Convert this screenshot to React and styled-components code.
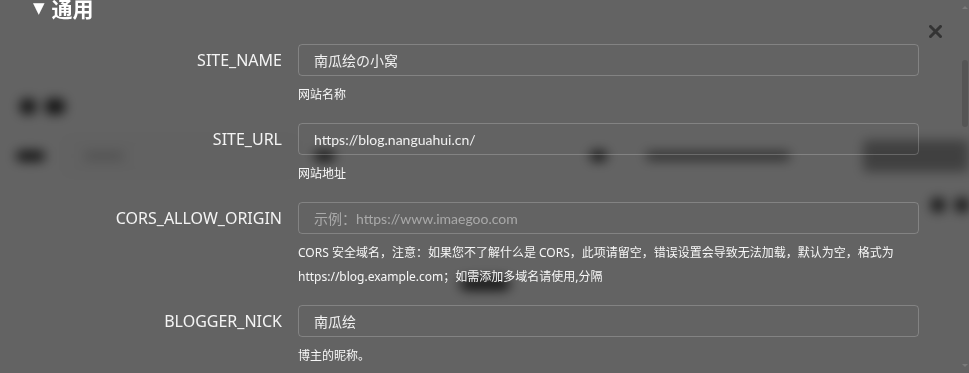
import React from 'react';
import styled, {createGlobalStyle} from 'styled-components';

const fields = [
    {key: 'SITE_NAME', value: '南瓜绘の小窝', help: ['网站名称']},
    {key: 'SITE_URL', value: 'https://blog.nanguahui.cn/', help: ['网站地址']},
    {
        key: 'CORS_ALLOW_ORIGIN',
        placeholder: '示例：https://www.imaegoo.com',
        help: [
            'CORS 安全域名，注意：如果您不了解什么是 CORS，此项请留空，错误设置会导致无法加载，默认为空，格式为',
            'https://blog.example.com；如需添加多域名请使用,分隔',
        ],
    },
    {key: 'BLOGGER_NICK', value: '南瓜绘', help: ['博主的昵称。']},
];

const App = () => {
    return (
        <>
            <GlobalStyle/>
            <BgPage>
                <BgTitle>
                    <Blob w={16} h={15}/>
                    <Blob w={20} h={15}/>
                </BgTitle>
                <BgRow>
                    <Blob w={30} h={10}/>
                    <BgInput>
                        <Blob w={40} h={8} light/>
                    </BgInput>
                    <BgGap/>
                    <Blob w={22} h={10}/>
                    <BgSpacer w={265}/>
                    <Blob w={18} h={10}/>
                    <BgSpacer w={40}/>
                    <Blob w={150} h={8} soft/>
                    <BgSpacer w={76}/>
                    <BgButton/>
                </BgRow>
                <BgIcons>
                    <Blob w={14} h={14}/>
                    <Blob w={14} h={14}/>
                </BgIcons>
                <BgFoot>
                    <Blob w={50} h={12}/>
                </BgFoot>
            </BgPage>

            <Overlay>
                <Heading><Caret>▼</Caret>通用</Heading>
                <CloseButton aria-label="close">
                    <svg width="13" height="13" viewBox="0 0 13 13">
                        <path d="M1.5 1.5 L11.5 11.5 M11.5 1.5 L1.5 11.5" stroke="#343434" strokeWidth="3"
                              strokeLinecap="square"/>
                    </svg>
                </CloseButton>
                <Form>
                    { fields.map ( ( f ) => (
                        <Row key={ f.key }>
                            <Label>{ f.key }</Label>
                            <Field>
                                <Input defaultValue={ f.value || '' } placeholder={ f.placeholder }/>
                                <Help>
                                    { f.help.map ( ( line, i ) => <div key={ i }>{ line }</div> ) }
                                </Help>
                            </Field>
                        </Row>
                    ) ) }
                </Form>
                <ScrollBar>
                    <ScrollArrow/>
                    <ScrollThumb/>
                    <ScrollArrow down/>
                </ScrollBar>
            </Overlay>
        </>
    );
};

// ---------- STILI ----------

const GlobalStyle = createGlobalStyle`
    html, body {
        margin: 0;
        height: 100%;
        overflow: hidden;
        background: #fff;
        font-family: "Noto Sans", "Noto Sans CJK SC", sans-serif;
    }
`;

const BgPage = styled.div`
    height: 373px;
    padding: 99px 0 0 20px;
    box-sizing: border-box;
    filter: blur(6px);
    background: #fff;
`;

const BgTitle = styled.div`
    display: flex;
    gap: 9px;
`;

const Blob = styled.div`
    width: ${ p => p.w }px;
    height: ${ p => p.h }px;
    border-radius: 6px;
    background: ${ p => p.light ? '#d0d0d0' : p.soft ? '#6a6a6a' : '#2a2a2a' };
`;

const BgRow = styled.div`
    display: flex;
    align-items: center;
    margin: 24px 0 0 -4px;
`;

const BgInput = styled.div`
    width: 220px;
    height: 34px;
    margin-left: 20px;
    display: flex;
    align-items: center;
    padding-left: 18px;
    border: 1px solid #e4e4e4;
    border-radius: 4px;
    background: #fbfbfb;
`;

const BgGap = styled.div`
    width: 18px;
`;

const BgSpacer = styled.div`
    width: ${ p => p.w }px;
`;

const BgButton = styled.div`
    width: 110px;
    height: 32px;
    border-radius: 4px;
    background: #a5a5a5;
`;

const BgIcons = styled.div`
    display: flex;
    gap: 10px;
    justify-content: flex-end;
    margin: 24px 0 0 0;
`;

const BgFoot = styled.div`
    display: flex;
    justify-content: center;
    margin: 66px 0 0 -20px;
`;

const Overlay = styled.div`
    position: fixed;
    inset: 0;
    background: rgba(0, 0, 0, 0.61);
    overflow: hidden;
    color: #f2f2f2;
`;

const Heading = styled.h2`
    display: flex;
    align-items: center;
    margin: -7px 0 0 33px;
    font-size: 21px;
    line-height: 30px;
    font-weight: 700;
    color: #fff;
    font-family: "Noto Sans CJK SC", "Noto Sans", sans-serif;
`;

const Caret = styled.span`
    font-family: "DejaVu Sans", sans-serif;
    font-size: 15px;
    margin-right: 7px;
    font-weight: 400;
`;

const CloseButton = styled.button`
    position: absolute;
    top: 24px;
    right: 27px;
    width: 14px;
    height: 14px;
    padding: 0;
    border: none;
    background: none;
    display: flex;
    align-items: center;
    justify-content: center;
`;

const Form = styled.div`
    display: flex;
    flex-direction: column;
    margin-top: 21px;
`;

const Row = styled.div`
    display: flex;
    align-items: flex-start;
    gap: 16px;
    margin-bottom: 16px;
`;

const Label = styled.div`
    width: 282px;
    height: 32px;
    line-height: 32px;
    text-align: right;
    font-size: 16px;
    color: #f4f4f4;
`;

const Field = styled.div`
    width: 621px;
    display: flex;
    flex-direction: column;
`;

const Input = styled.input`
    box-sizing: border-box;
    height: 32px;
    padding: 0 15px;
    border: 1px solid rgba(255, 255, 255, 0.2);
    border-radius: 4px;
    background: transparent;
    color: #f0f0f0;
    font-size: 14px;
    font-family: Lato, "Noto Sans CJK SC", sans-serif;
    outline: none;

    &::placeholder {
        color: #a9a9a9;
    }
`;

const Help = styled.div`
    margin-top: 7px;
    font-size: 12px;
    line-height: 24px;
    color: #f6f6f6;
`;

const ScrollBar = styled.div`
    position: absolute;
    top: 0;
    right: 0;
    bottom: 0;
    width: 8px;
    display: flex;
    flex-direction: column;
    align-items: center;
`;

const ScrollArrow = styled.div`
    width: 0;
    height: 0;
    margin: ${ p => p.down ? 'auto 0 6px' : '6px 0 0' };
    border-left: 3px solid transparent;
    border-right: 3px solid transparent;
    ${ p => p.down ? 'border-top: 3px solid #7a7a7a;' : 'border-bottom: 3px solid #7a7a7a;' }
`;

const ScrollThumb = styled.div`
    width: 6px;
    height: 67px;
    margin-top: 51px;
    border-radius: 3px;
    background: #555;
`;

export default App;
